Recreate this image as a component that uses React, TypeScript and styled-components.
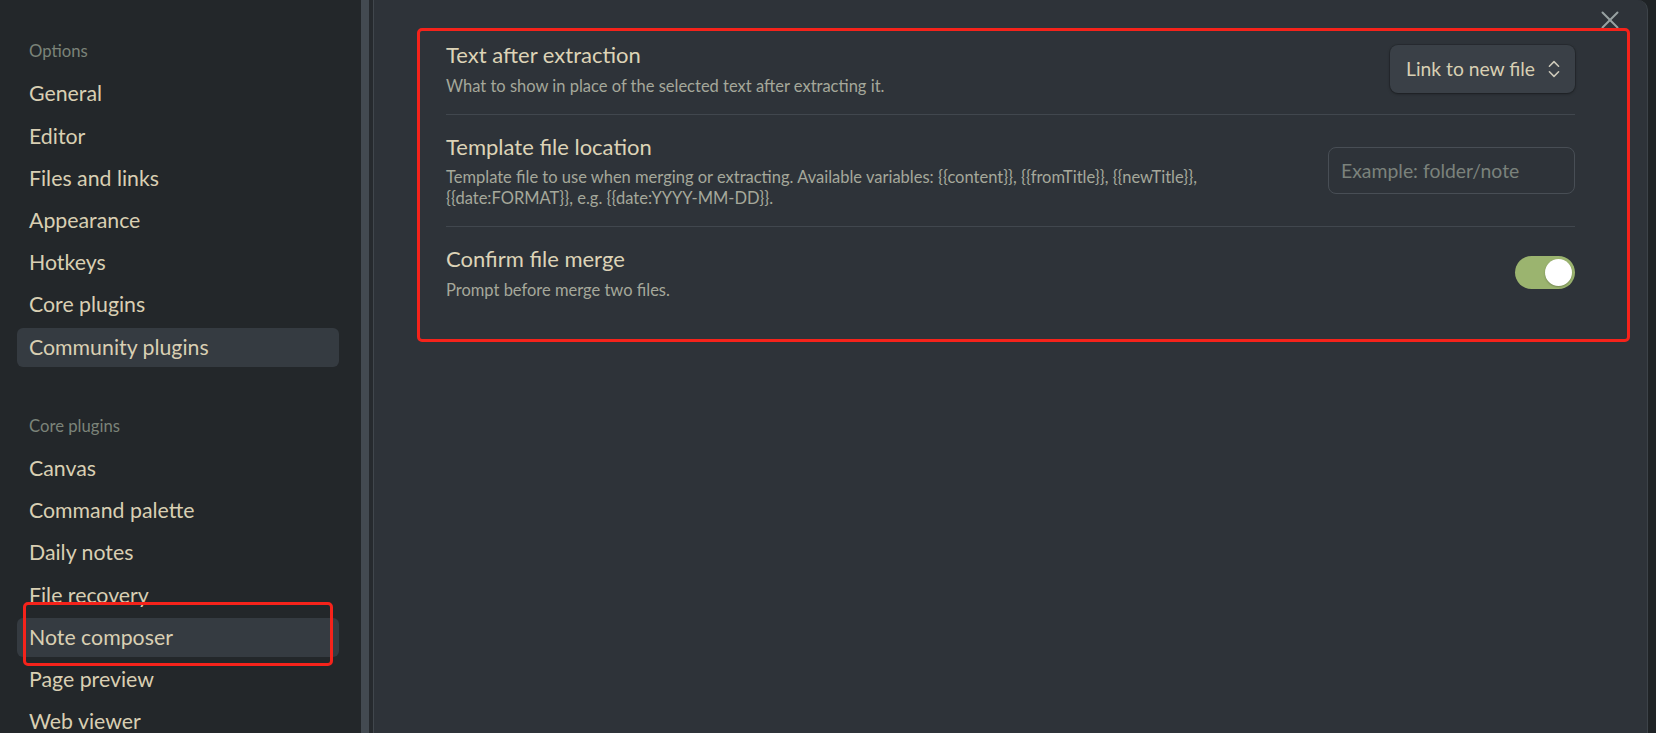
import React from "react";
import styled, { createGlobalStyle } from "styled-components";
import { ChevronsUpDown, X } from "lucide-react";

const Global = createGlobalStyle`
  html, body { margin: 0; padding: 0; background: #1f2326; }
  body { font-family: Lato, "Noto Sans", sans-serif; -webkit-font-smoothing: antialiased; }
  * { box-sizing: border-box; }
`;

const Shell = styled.div`
  position: relative;
  display: flex;
  width: 1656px;
  height: 733px;
  overflow: hidden;
  background: #1f2326;
`;

const Sidebar = styled.nav`
  width: 361px;
  flex: none;
  background: #23272a;
  padding: 36px 22px 0 17px;
  display: flex;
  flex-direction: column;
`;

const ScrollTrack = styled.div`
  width: 12px;
  flex: none;
  background: #262a2e;
  display: flex;
`;

const ScrollThumb = styled.div`
  width: 8px;
  height: 100%;
  background: #434a51;
`;

const Group = styled.div`
  display: flex;
  flex-direction: column;
  gap: 3.2px;
  & + & { margin-top: 44px; }
`;

const GroupLabel = styled.div`
  height: 30px;
  line-height: 30px;
  padding-left: 12px;
  margin-bottom: 5.3px;
  font-size: 16.7px;
  color: #7b8379;
`;

const NavItem = styled.div<{ $active?: boolean }>`
  height: 39px;
  line-height: 39px;
  padding-left: 12px;
  border-radius: 6px;
  font-size: 21.3px;
  color: #d9cfb3;
  background: ${(p) => (p.$active ? "#353b41" : "transparent")};
  white-space: nowrap;
`;

const Main = styled.main`
  position: relative;
  flex: 1;
  background: #2e3339;
  border-left: 1px solid #41474d;
  border-right: 1px solid #3d4349;
  border-top-right-radius: 10px;
  padding: 23px 72px 0 72px;
`;

const OuterGutter = styled.div`
  width: 8px;
  flex: none;
  background: #1f2326;
`;

const CloseButton = styled.button`
  position: absolute;
  top: 5px;
  right: 22px;
  width: 30px;
  height: 30px;
  padding: 0;
  border: none;
  background: transparent;
  color: #97a1a1;
  display: flex;
  align-items: center;
  justify-content: center;
`;

const SettingItem = styled.div`
  display: flex;
  align-items: center;
  gap: 24px;
  padding: 18px 0 17px;
  & + & { border-top: 1px solid #41474e; }
`;

const Info = styled.div`
  flex: 1;
  display: flex;
  flex-direction: column;
  gap: 6.5px;
`;

const Title = styled.div`
  font-size: 22px;
  line-height: 28px;
  color: #ddd3b7;
`;

const Desc = styled.div`
  font-size: 16.5px;
  line-height: 21px;
  color: #a5a89b;
`;

const Control = styled.div`
  flex: none;
  display: flex;
  align-items: center;
`;

const Dropdown = styled.div`
  width: 185px;
  height: 48px;
  border-radius: 8px;
  background: #3a4047;
  box-shadow: 0 1px 3px rgba(0, 0, 0, 0.35), 0 0 0 1px rgba(0, 0, 0, 0.12);
  display: flex;
  align-items: center;
  justify-content: space-between;
  padding: 0 10px 0 16px;
  font-size: 19.3px;
  color: #d8cfb3;
  white-space: nowrap;
  svg { color: #cdc9ba; flex: none; }
`;

const TextInput = styled.input`
  width: 247px;
  height: 47px;
  border-radius: 8px;
  border: 1px solid #484e55;
  background: transparent;
  padding: 0 12px;
  font-family: inherit;
  font-size: 19.4px;
  color: #d8cfb3;
  outline: none;
  &::placeholder { color: #7b827c; }
`;

const Toggle = styled.div<{ $on?: boolean }>`
  width: 60px;
  height: 33px;
  border-radius: 17px;
  background: ${(p) => (p.$on ? "#9bb46f" : "#4a5057")};
  padding: 3px 3.5px;
  display: flex;
  justify-content: ${(p) => (p.$on ? "flex-end" : "flex-start")};
`;

const Knob = styled.div`
  width: 27px;
  height: 27px;
  border-radius: 50%;
  background: #ffffff;
  box-shadow: 0 1px 2px rgba(0, 0, 0, 0.25);
`;

const Annotation = styled.div<{ $x: number; $y: number; $w: number; $h: number }>`
  position: absolute;
  left: ${(p) => p.$x}px;
  top: ${(p) => p.$y}px;
  width: ${(p) => p.$w}px;
  height: ${(p) => p.$h}px;
  border: 3px solid #f5231b;
  border-radius: 5px;
  pointer-events: none;
`;

const options = ["General", "Editor", "Files and links", "Appearance", "Hotkeys", "Core plugins", "Community plugins"];
const core = ["Canvas", "Command palette", "Daily notes", "File recovery", "Note composer", "Page preview", "Web viewer"];

export default function App() {
  return (
    <>
      <Global />
      <Shell>
        <Sidebar>
          <Group>
            <GroupLabel>Options</GroupLabel>
            {options.map((o) => (
              <NavItem key={o} $active={o === "Community plugins"}>{o}</NavItem>
            ))}
          </Group>
          <Group>
            <GroupLabel>Core plugins</GroupLabel>
            {core.map((o) => (
              <NavItem key={o} $active={o === "Note composer"}>{o}</NavItem>
            ))}
          </Group>
        </Sidebar>
        <ScrollTrack>
          <ScrollThumb />
        </ScrollTrack>
        <Main>
          <CloseButton aria-label="Close">
            <X size={30} strokeWidth={1.6} />
          </CloseButton>
          <SettingItem>
            <Info>
              <Title>Text after extraction</Title>
              <Desc>What to show in place of the selected text after extracting it.</Desc>
            </Info>
            <Control>
              <Dropdown>
                <span>Link to new file</span>
                <ChevronsUpDown size={22} strokeWidth={1.7} />
              </Dropdown>
            </Control>
          </SettingItem>
          <SettingItem>
            <Info>
              <Title>Template file location</Title>
              <Desc>
                Template file to use when merging or extracting. Available variables: {"{{content}}"}, {"{{fromTitle}}"}, {"{{newTitle}}"},
                <br />
                {"{{date:FORMAT}}"}, e.g. {"{{date:YYYY-MM-DD}}"}.
              </Desc>
            </Info>
            <Control>
              <TextInput placeholder="Example: folder/note" />
            </Control>
          </SettingItem>
          <SettingItem>
            <Info>
              <Title>Confirm file merge</Title>
              <Desc>Prompt before merge two files.</Desc>
            </Info>
            <Control>
              <Toggle $on>
                <Knob />
              </Toggle>
            </Control>
          </SettingItem>
        </Main>
        <OuterGutter />
        <Annotation $x={417} $y={28} $w={1213} $h={314} />
        <Annotation $x={23} $y={602} $w={310} $h={64} />
      </Shell>
    </>
  );
}
